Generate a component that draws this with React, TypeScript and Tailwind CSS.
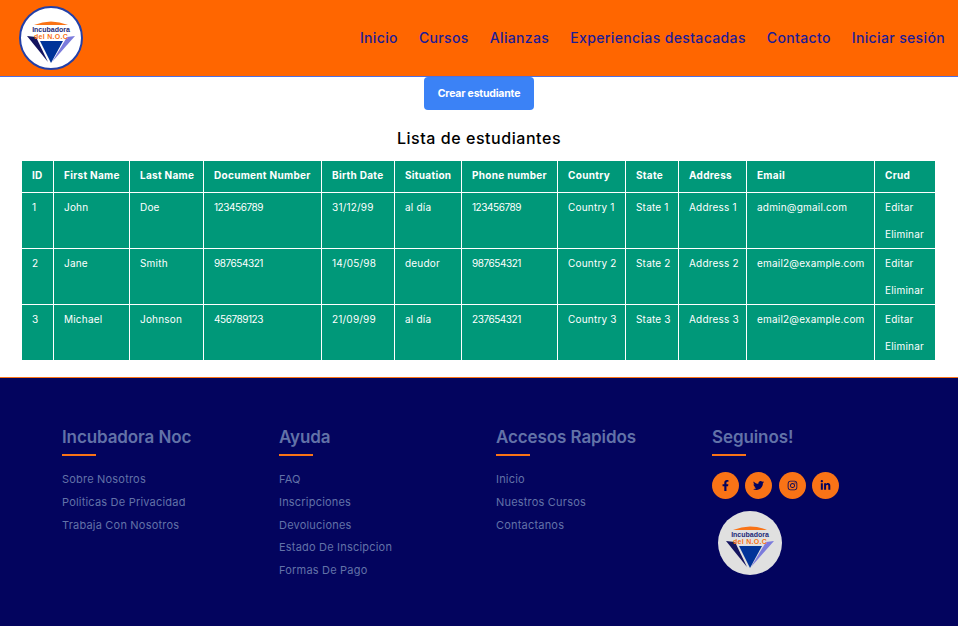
import { FaFacebookF, FaTwitter, FaInstagram, FaLinkedinIn } from 'react-icons/fa'

const font = { fontFamily: 'Inter, "Noto Sans", sans-serif' }

const columns = [
  'w-[32px]', 'w-[76px]', 'w-[74px]', 'w-[118px]', 'w-[73px]', 'w-[67px]',
  'w-[96px]', 'w-[68px]', 'w-[53px]', 'w-[68px]', 'w-[128px]', 'w-[60px]',
]

const headers = ['ID', 'First Name', 'Last Name', 'Document Number', 'Birth Date', 'Situation', 'Phone number', 'Country', 'State', 'Address', 'Email', 'Crud']

const students = [
  ['1', 'John', 'Doe', '123456789', '31/12/99', 'al día', '123456789', 'Country 1', 'State 1', 'Address 1', 'admin@gmail.com'],
  ['2', 'Jane', 'Smith', '987654321', '14/05/98', 'deudor', '987654321', 'Country 2', 'State 2', 'Address 2', 'email2@example.com'],
  ['3', 'Michael', 'Johnson', '456789123', '21/09/99', 'al día', '237654321', 'Country 3', 'State 3', 'Address 3', 'email2@example.com'],
]

const navLinks = ['Inicio', 'Cursos', 'Alianzas', 'Experiencias destacadas', 'Contacto', 'Iniciar sesión']

const footerColumns = [
  { title: 'Incubadora Noc', links: ['Sobre Nosotros', 'Politicas De Privacidad', 'Trabaja Con Nosotros'] },
  { title: 'Ayuda', links: ['FAQ', 'Inscripciones', 'Devoluciones', 'Estado De Inscipcion', 'Formas De Pago'] },
  { title: 'Accesos Rapidos', links: ['Inicio', 'Nuestros Cursos', 'Contactanos'] },
]

function Logo({ fill, ring }: { fill: string; ring?: string }) {
  return (
    <svg width="64" height="64" viewBox="0 0 64 64" className="block">
      <circle cx="32" cy="32" r={ring ? 31 : 32} fill={fill} stroke={ring ?? 'none'} strokeWidth="2" />
      <path d="M15 19 Q32 12 49 19 Z" fill="#f97316" />
      <polygon points="8,30 17,31 29,56" fill="#14145f" />
      <polygon points="56,30 48,31 33,56" fill="#7b7bdc" />
      <polygon points="21,35 44,35 32,57" fill="#003399" />
      <text x="32" y="26" textAnchor="middle" fontSize="7" fontWeight="700" fill="#1e2a78" fontFamily="Liberation Sans, sans-serif">Incubadora</text>
      <text x="32" y="33" textAnchor="middle" fontSize="7" fontWeight="700" letterSpacing="0.3" fill="#f97316" fontFamily="Liberation Sans, sans-serif">del N.O.C</text>
    </svg>
  )
}

function SectionTitle({ children }: { children: string }) {
  return (
    <div>
      <h4 className="text-[17px] leading-[20px] font-semibold tracking-[-0.1px] text-[#6272a8]">{children}</h4>
      <div className="mt-[7px] h-[2px] w-[34px] bg-[#f97316]" />
    </div>
  )
}

export default function App() {
  return (
    <div className="min-h-[626px] bg-white" style={font}>
      {/* Navbar */}
      <header className="h-[77px] bg-[#ff6600] border-b border-[#4f6fe0] flex items-start justify-between pl-[19px] pr-[13px] pt-[6px]">
        <Logo fill="#ffffff" ring="#2340a8" />
        <nav className="flex gap-[21px] pt-[22px]">
          {navLinks.map((link) => (
            <a key={link} className="text-[14px] leading-[20px] font-medium tracking-[0.36px] text-[#1c1c96]">{link}</a>
          ))}
        </nav>
      </header>

      <main className="h-[300px]">
        <div className="flex justify-center">
          <button className="w-[110px] h-[33px] pt-[1px] rounded-[4px] bg-[#3b82f6] text-white text-[10.5px] tracking-[-0.2px] font-bold">Crear estudiante</button>
        </div>
        <h2 className="mt-[18px] text-center text-[16px] leading-[20px] font-medium tracking-[0.55px] text-black">Lista de estudiantes</h2>

        <div className="mt-[13px] px-[22px]">
          <table className="table-fixed border-separate border-spacing-0 w-[913px] bg-[#009879] text-white text-[10px] tracking-[0.2px]">
            <colgroup>
              {columns.map((c, i) => <col key={i} className={c} />)}
            </colgroup>
            <thead>
              <tr>
                {headers.map((h, i) => (
                  <th key={h} className={`h-[32px] pl-[10px] pb-[2px] text-left font-bold tracking-[0.3px] border-b border-white whitespace-nowrap ${i < 11 ? 'border-r' : ''}`}>{h}</th>
                ))}
              </tr>
            </thead>
            <tbody>
              {students.map((row, r) => (
                <tr key={row[0]}>
                  {row.map((cell, i) => (
                    <td key={i} className={`pl-[10px] pt-[8px] align-top leading-[13px] whitespace-nowrap border-r border-white ${i === 3 || i === 6 ? 'tracking-[-0.45px]' : ''} ${r < 2 ? 'h-[56px] border-b' : 'h-[55px]'}`}>{cell}</td>
                  ))}
                  <td className={`pl-[10px] pt-[8px] align-top leading-[13px] whitespace-nowrap border-white ${r < 2 ? 'h-[56px] border-b' : 'h-[55px]'}`}>
                    <div>Editar</div>
                    <div className="mt-[14px]">Eliminar</div>
                  </td>
                </tr>
              ))}
            </tbody>
          </table>
        </div>
      </main>

      {/* Footer */}
      <footer className="h-[249px] bg-[#03045e] border-t border-[#f97316] pl-[62px] pt-[49px] grid grid-cols-[217px_217px_216px_auto]">
        {footerColumns.map((col) => (
          <div key={col.title}>
            <SectionTitle>{col.title}</SectionTitle>
            <ul className="mt-[16px] flex flex-col gap-[7.75px]">
              {col.links.map((link) => (
                <li key={link} className="text-[11px] leading-[15px] tracking-[0.2px] text-[#6272a8]">{link}</li>
              ))}
            </ul>
          </div>
        ))}
        <div>
          <SectionTitle>Seguinos!</SectionTitle>
          <div className="mt-[16px] flex gap-[6.25px]">
            {[FaFacebookF, FaTwitter, FaInstagram, FaLinkedinIn].map((Icon, i) => (
              <span key={i} className="w-[27px] h-[27px] rounded-full bg-[#f97316] flex items-center justify-center text-[#03045e]">
                <Icon className="w-[11px] h-[11px]" />
              </span>
            ))}
          </div>
          <div className="mt-[12px] ml-[6px]">
            <Logo fill="#e0e0e0" />
          </div>
        </div>
      </footer>
    </div>
  )
}
